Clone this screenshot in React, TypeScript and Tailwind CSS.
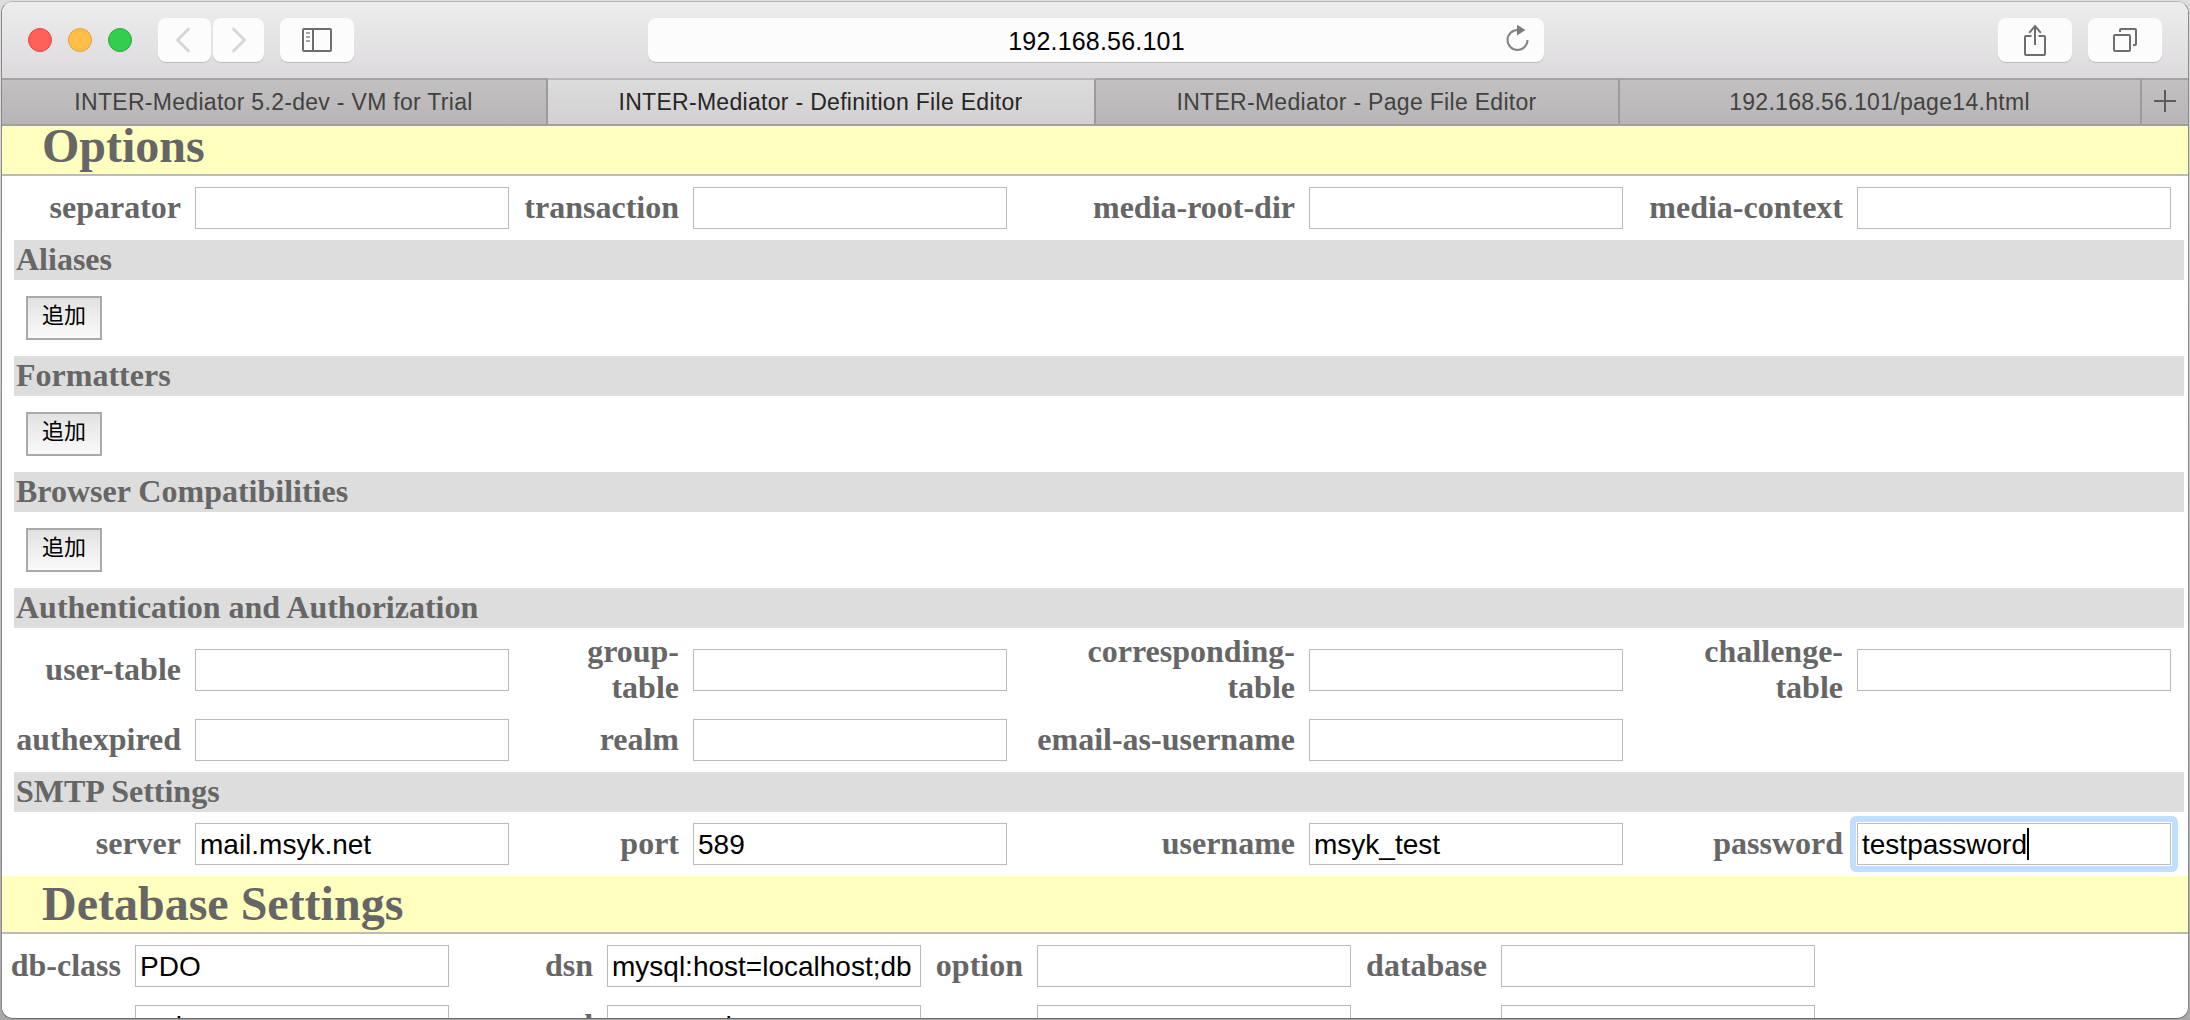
import React from "react";

type Cell = { label?: React.ReactNode; value?: string; focused?: boolean };

function TextBox({ value, focused }: { value?: string; focused?: boolean }) {
  return (
    <div className="relative h-[42px] w-[314px] border border-[#bbbbbb] bg-white pr-[7px] pl-1">
      {focused && (
        <div className="absolute -inset-2 rounded-[6px] border-[6px] border-[#bfdffc]" />
      )}
      <div className="flex h-10 items-center overflow-hidden pt-[2px] font-['Liberation_Sans',Arial,sans-serif] text-[28px] leading-[38px] whitespace-nowrap text-black">
        {value}
        {focused && <span className="mb-[2px] h-8 w-[2px] shrink-0 bg-black" />}
      </div>
    </div>
  );
}

function Fields({ cells, className }: { cells: Cell[]; className: string }) {
  return (
    <div className={`grid shrink-0 items-center ${className}`}>
      {cells.map((c, i) => (
        <React.Fragment key={i}>
          <div className="pr-[14px] pb-[2px] text-right text-[32px] leading-9 font-bold whitespace-nowrap">
            {c.label}
          </div>
          <TextBox value={c.value} focused={c.focused} />
        </React.Fragment>
      ))}
    </div>
  );
}

const optionCols = "grid-cols-[193px_314px_184px_314px_302px_314px_234px_314px]";
const dbCols = "grid-cols-[133px_314px_158px_314px_116px_314px_150px_314px]";

function Title({ children }: { children: React.ReactNode }) {
  return (
    <h1 className="h-[58px] shrink-0 border-b-2 border-[#bbbbbb] bg-[#ffffc0] pl-10 text-[48px] leading-[56px] font-bold">
      {children}
    </h1>
  );
}

function Section({ children }: { children: React.ReactNode }) {
  return (
    <h2 className="mr-1 ml-3 h-10 shrink-0 bg-[#dddddd] px-[2px] pt-px text-[32px] leading-9 font-bold">
      {children}
    </h2>
  );
}

function AddRow() {
  return (
    <div className="flex h-[76px] shrink-0 items-center pl-6">
      <button className="h-11 w-[76px] border-2 border-[#aaaaaa] bg-linear-to-b from-[#e2e2e2] to-[#fafafa] pb-[9px] font-['Noto_Sans_CJK_JP',sans-serif] text-[22px] leading-[31px] text-black">
        追加
      </button>
    </div>
  );
}

function ToolButton({ className, children }: { className: string; children: React.ReactNode }) {
  return (
    <div
      className={`flex h-11 shrink-0 items-center justify-center rounded-lg bg-[#fcfcfc] shadow-[0_1px_0_#bcbcbc] ${className}`}
    >
      {children}
    </div>
  );
}

function Toolbar() {
  return (
    <div className="flex h-[76px] shrink-0 items-center bg-linear-to-b from-[#eeedee] to-[#dcdadc] pr-[26px] pl-[26px]">
      <div className="flex gap-4">
        <span className="size-6 rounded-full border border-[#e14942] bg-[#ff6059]" />
        <span className="size-6 rounded-full border border-[#dfa03a] bg-[#ffbe48]" />
        <span className="size-6 rounded-full border border-[#27ab3a] bg-[#33cd50]" />
      </div>
      <ToolButton className="ml-[26px] w-[53px]">
        <svg className="-ml-1" width="16" height="26" viewBox="0 0 16 26" fill="none" stroke="#d6d6d6" strokeWidth="2.8">
          <path d="M13.5 2 L2.5 13 L13.5 24" strokeLinecap="round" />
        </svg>
      </ToolButton>
      <ToolButton className="ml-[2px] w-[51px]">
        <svg width="16" height="26" viewBox="0 0 16 26" fill="none" stroke="#d6d6d6" strokeWidth="2.8">
          <path d="M2.5 2 L13.5 13 L2.5 24" strokeLinecap="round" />
        </svg>
      </ToolButton>
      <ToolButton className="ml-4 w-[74px]">
        <svg width="30" height="24" viewBox="0 0 30 24" fill="none" stroke="#6e6e6e" strokeWidth="2">
          <rect x="1" y="1" width="28" height="22" rx="1" />
          <path d="M11 1 V23" />
          <path d="M4 5 H8 M4 9 H8 M4 13 H8" stroke="#8a8a8a" strokeWidth="1.6" />
        </svg>
      </ToolButton>
      <ToolButton className="relative ml-[294px] w-[896px]">
        <span className="pt-[2px] pl-px font-['Liberation_Sans',Arial,sans-serif] text-[25px] leading-7 tracking-[0.2px] text-black">
          192.168.56.101
        </span>
        <svg className="absolute top-[6px] right-[14px]" width="26" height="30" viewBox="0 0 26 30">
          <path
            d="M23.5 16 A10 10 0 1 1 13.5 6"
            fill="none"
            stroke="#848484"
            strokeWidth="2"
          />
          <path d="M13 0.8 L21.5 6 L13 11.6 Z" fill="#7c7c7c" />
        </svg>
      </ToolButton>
      <ToolButton className="ml-auto w-[74px]">
        <svg className="-mt-px" width="24" height="32" viewBox="0 0 24 32" fill="none" stroke="#6e6e6e" strokeWidth="2">
          <path d="M8.5 12 H3 Q2 12 2 13 V30 Q2 31 3 31 H21 Q22 31 22 30 V13 Q22 12 21 12 H15.5" />
          <path d="M12 2 V21 M6.2 8.8 L12 2 L17.8 8.8" />
        </svg>
      </ToolButton>
      <ToolButton className="ml-4 w-[74px]">
        <svg width="26" height="26" viewBox="0 0 26 26" fill="none" stroke="#6e6e6e" strokeWidth="2">
          <rect x="2" y="8" width="16" height="16" rx="1.2" />
          <path d="M8 5 V3 Q8 2 9 2 H23 Q24 2 24 3 V17 Q24 18 23 18 H21" />
        </svg>
      </ToolButton>
    </div>
  );
}

const tabs = [
  { title: "INTER-Mediator 5.2-dev - VM for Trial", width: "w-[546px]" },
  { title: "INTER-Mediator - Definition File Editor", width: "w-[548px]", active: true },
  { title: "INTER-Mediator - Page File Editor", width: "w-[524px]" },
  { title: "192.168.56.101/page14.html", width: "w-[522px]" },
];

function TabBar() {
  return (
    <div className="flex h-12 shrink-0 border-b-2 border-[#a19fa0] font-['Liberation_Sans',Arial,sans-serif] text-[23px] tracking-[0.3px]">
      {tabs.map((t) => (
        <div
          key={t.title}
          className={`flex h-[46px] shrink-0 items-center justify-center border-t-2 border-r-2 border-r-[#9c9a9b] bg-linear-to-b pr-px ${t.width} ${
            t.active
              ? "border-t-[#bbb9ba] from-[#dddcdc] to-[#d2d0d0] text-[#262626]"
              : "border-t-[#a3a1a2] from-[#c2c0c0] to-[#b7b5b5] text-[#424242]"
          }`}
        >
          {t.title}
        </div>
      ))}
      <div className="flex h-[46px] flex-1 items-center justify-center border-t-2 border-t-[#a3a1a2] bg-linear-to-b from-[#c2c0c0] to-[#b7b5b5] pr-px pb-[2px]">
        <svg width="22" height="22" viewBox="0 0 22 22" stroke="#5c5c5c" strokeWidth="2">
          <path d="M11 0 V22 M0 11 H22" />
        </svg>
      </div>
    </div>
  );
}

export default function App() {
  return (
    <div className="h-[1020px] w-[2190px] overflow-hidden bg-linear-to-b from-[#dedede] to-[#a8a8a8] px-px pt-px pb-px font-['Liberation_Serif','Times_New_Roman',serif] text-[#666666]">
      <div className="flex h-[1018px] flex-col overflow-hidden rounded-[12px] border border-t-[#b5b7b5] border-r-[#8a8a8a] border-b-[#6a6a6a] border-l-[#8a8a8a] bg-white">
        <Toolbar />
        <TabBar />
        <div className="flex flex-1 flex-col overflow-hidden">
          <div className="-mt-2 flex flex-col">
            <Title>Options</Title>
            <Fields
              className={`h-16 ${optionCols}`}
              cells={[
                { label: "separator" },
                { label: "transaction" },
                { label: "media-root-dir" },
                { label: "media-context" },
              ]}
            />
            <Section>Aliases</Section>
            <AddRow />
            <Section>Formatters</Section>
            <AddRow />
            <Section>Browser Compatibilities</Section>
            <AddRow />
            <Section>Authentication and Authorization</Section>
            <Fields
              className={`h-[84px] ${optionCols}`}
              cells={[
                { label: "user-table" },
                { label: <>group-<br />table</> },
                { label: <>corresponding-<br />table</> },
                { label: <>challenge-<br />table</> },
              ]}
            />
            <Fields
              className={`mb-1 h-14 ${optionCols}`}
              cells={[{ label: "authexpired" }, { label: "realm" }, { label: "email-as-username" }]}
            />
            <Section>SMTP Settings</Section>
            <Fields
              className={`h-16 ${optionCols}`}
              cells={[
                { label: "server", value: "mail.msyk.net" },
                { label: "port", value: "589" },
                { label: "username", value: "msyk_test" },
                { label: "password", value: "testpassword", focused: true },
              ]}
            />
            <Title>Detabase Settings</Title>
            <Fields
              className={`h-16 ${dbCols}`}
              cells={[
                { label: "db-class", value: "PDO" },
                { label: "dsn", value: "mysql:host=localhost;dbname=test_db" },
                { label: "option" },
                { label: "database" },
              ]}
            />
            <Fields
              className={`h-14 ${dbCols}`}
              cells={[
                { label: "user", value: "web" },
                { label: "password", value: "password" },
                { label: "server" },
                { label: "port" },
              ]}
            />
          </div>
        </div>
      </div>
    </div>
  );
}
